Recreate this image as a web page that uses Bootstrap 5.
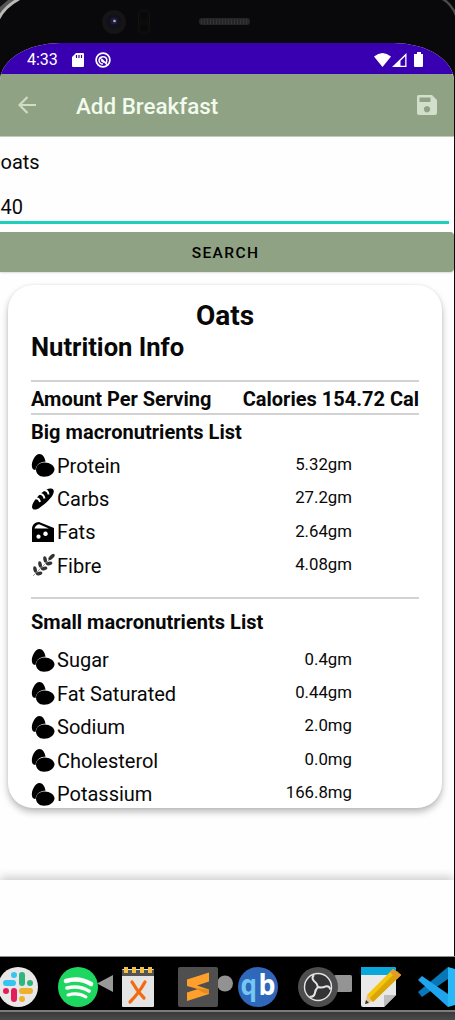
<!DOCTYPE html>
<html lang="en">
<head>
<meta charset="utf-8">
<meta name="viewport" content="width=device-width, initial-scale=1">
<title>Add Breakfast</title>
<link href="https://cdn.jsdelivr.net/npm/bootstrap@5.3.0/dist/css/bootstrap.min.css" rel="stylesheet">
<style>
body{width:455px;height:1020px;background:#09090b;font-family:Roboto,sans-serif;color:#080808;line-height:1}
svg{display:block;flex:none}
.bezel{height:43px}
.screen{width:454px;height:913px;background:#fefefe;border-radius:60px 60px 0 0/38px 38px 0 0}
.status{height:31px;background:#3900b1;color:#fff;font-size:16px;padding:2px 30px 0 27px}
.sd-icon{margin-left:14px}
.sync-icon{margin-left:11px}
.appbar{height:62px;background:#8fa283;border-radius:0 3px 0 0;padding:0 16px 0 17px}
.appbar h1{font-size:22.4px;font-weight:500;color:#f2faee;line-height:30px;margin-left:38px;padding-top:2px}
.topline{height:1px;background:#c0cbb9}
.field{font-size:20px;padding-left:.5px;height:42px;line-height:50px}
.field.focus-field{height:45px;margin-right:5px;line-height:56px;border-bottom:3px solid #1fcfbd}
.search-btn{height:40px;margin-top:8px;background:#8fa283!important;border-radius:0 4px 4px 0;font-size:15.5px;font-weight:500;letter-spacing:1.4px;padding:4px 3px 0 0;box-shadow:0 1px 2px #0002}
.food{width:434px;height:523px;margin:13px 0 0 8px;padding:15px 23px 0;border:0;border-radius:25px;box-shadow:0 4px 7px #0004,0 0 3px #0001;overflow:hidden;background:#fff;color:#080808}
.food>*{flex-shrink:0}
.food h2{font-size:28px;font-weight:700;line-height:31px;height:31px}
.food h3{font-size:25.6px;font-weight:700;line-height:33px;height:49px}
.food h4{font-size:20px;font-weight:700;letter-spacing:.03px}
.big-title{height:34px;line-height:35px}
.small-title{height:44.800px;line-height:46px}
.group-rule{margin-top:14.400px}
.rule{height:2px;background:#d2d2d2}
.serving{height:31px;font-size:20px;font-weight:700;padding-top:5px}
.nut{height:33.4px;font-size:20px;padding-right:67px}
.nut svg{margin:0 2px 1px 0}
.nut .amount{font-size:16.8px;padding-bottom:3px}
.bottomnav{height:76px;margin-top:72px;background:#fefefe;box-shadow:0 -3px 9px #0003}
.dock{height:56px;background:#000;border-top:1px solid #8e8e8e;border-bottom:2px solid #7c7c7c;width:455px;overflow:hidden}
.chin{height:8px;background:linear-gradient(#393939,#4a4a4a)}
</style>
</head>
<body class="overflow-hidden">
<svg width="0" height="0" class="position-absolute"><defs>
<symbol id="egg" viewBox="0 0 24 24"><path d="M1 14C0 9 4 1 8.500 1 11.500 1 14 4.500 14.500 8.700 10 8.700 5.500 10.500 4.500 17 2.500 17 1.300 16 1 14Z"/><path d="M5 16.500C5 12 9 9.500 14 9.500 18.500 9.500 23.500 12.500 23.500 16.500 23 20.500 19 23.700 13 23.700 8 23.700 5 20.500 5 16.500Z"/></symbol>
</defs></svg>
<div class="bezel">
<svg width="455" height="43" viewBox="0 0 455 43">
<path d="M0 15Q7 5 18 0H0Z" fill="#555"/><path d="M-2 20Q4 7 19-1" fill="none" stroke="#b9bab5" stroke-width="3"/><path d="M0 7L8 0H0Z" fill="#111"/>
<path d="M441-2Q451 3 456 15" fill="none" stroke="#4a4a4a" stroke-width="2.500"/>
<circle cx="114" cy="22" r="12" fill="#161416"/><circle cx="114" cy="22" r="7.500" fill="#11111c"/><circle cx="114" cy="21" r="3.500" fill="#1e1c38"/><circle cx="114.500" cy="21" r="1.300" fill="#b2afc8"/>
<rect x="138.500" y="10" width="11" height="24" rx="5" fill="#0c0b0c" stroke="#131213"/><circle cx="144" cy="16" r="3" fill="#080808"/><circle cx="144" cy="28" r="3" fill="#080808"/>
<rect x="199" y="18" width="51" height="7" rx="3" fill="#252526"/><path d="M201 21.500H249" stroke="#343434" stroke-width="5" stroke-dasharray="1 2"/>
</svg>
</div>
<main class="screen overflow-hidden">
<div class="status d-flex align-items-center">
<span>4:33</span>
<svg class="sd-icon" width="12" height="14" viewBox="0 0 12 14"><path d="M4 0H11Q12 0 12 1V13Q12 14 11 14H1Q0 14 0 13V4Z" fill="#fff"/><path d="M4.500 2V5M7 2V5M9.500 2V5" stroke="#3900b1" stroke-width="1.200"/></svg>
<svg class="sync-icon" width="16" height="16" viewBox="0 0 16 16" fill="none" stroke="#fff"><circle cx="8" cy="8" r="6.900" stroke-width="1.700"/><path d="M4 8.500A4 4 0 0 1 11.800 7.500C12 9 11.500 10.500 10.500 11.500M4 8.500A4 4 0 0 0 8 12M5 5.500L12.500 13M6 8.500L9 10.500" stroke-width="1.500"/></svg>
<svg class="ms-auto" width="50" height="16" viewBox="0 0 50 16"><path d="M0 4.500Q8.500-2.500 17 4.500L8.500 15Z" fill="#fff"/><path fill-rule="evenodd" d="M18 15L32.500 1V15ZM26.500 8.800L31.200 4.200V13.700H26.500Z" fill="#fff"/><path d="M43 0H47V2H49V14Q49 15 48 15H41Q40 15 40 14V2H43Z" fill="#fff"/></svg>
</div>
<header class="appbar d-flex align-items-center">
<svg width="21" height="20" viewBox="0 0 21 20"><path d="M10.500 2L2.500 10L10.500 18M2 10H19" fill="none" stroke="#cfdcc8" stroke-width="2.200"/></svg>
<h1 class="mb-0">Add Breakfast</h1>
<svg class="ms-auto" width="22" height="22" viewBox="0 0 22 22"><path fill="#d2dfcb" fill-rule="evenodd" d="M2.500 1H16L21 6V19Q21 21 19 21H3Q1 21 1 19V3Q1 1 2.500 1ZM3.500 3.500V8H14.500V3.500ZM11 12A3.200 3.200 0 1 0 11.010 12Z"/></svg>
</header>
<div class="topline"></div>
<div class="field">oats</div>
<div class="field focus-field">40</div>
<button class="search-btn btn w-100 border-0 d-flex align-items-center justify-content-center text-black">SEARCH</button>
<section class="food card">
<h2 class="text-center mb-0">Oats</h2>
<h3 class="mb-0">Nutrition Info</h3>
<div class="rule"></div>
<div class="serving d-flex justify-content-between"><span class="lh-sm">Amount Per Serving</span><span class="lh-sm">Calories 154.72 Cal</span></div>
<div class="rule"></div>
<h4 class="big-title mb-0">Big macronutrients List</h4>
<div class="nut d-flex align-items-center"><svg width="24" height="24"><use href="#egg"/></svg>Protein<span class="amount ms-auto">5.32gm</span></div>
<div class="nut d-flex align-items-center"><svg width="24" height="24" viewBox="0 0 24 24"><path d="M1 20C1 17 3 14 6 10.500 10 6 15 2 19 1.500 22 1 23.500 3 22.500 6 21 11 14 17 9 20.500 5 23.500 1 23 1 20Z"/><path d="M3 11.500Q8 10.500 9 15M7 7Q12.500 6 13.500 11.500M11.500 3Q17 2.500 17.500 7.500" fill="none" stroke="#fff" stroke-width="1.900"/></svg>Carbs<span class="amount ms-auto">27.2gm</span></div>
<div class="nut d-flex align-items-center"><svg width="24" height="24" viewBox="0 0 24 24"><path fill-rule="evenodd" d="M1 9C1 5 4 2 8 2L23 8V22H1ZM3.500 8.500H18L8 4.200Q4.500 5 3.500 8.500ZM14.500 11.500A2.300 2.300 0 1 0 14.510 11.500ZM7.500 14.500A2.100 2.100 0 1 0 7.510 14.500Z"/></svg>Fats<span class="amount ms-auto">2.64gm</span></div>
<div class="nut d-flex align-items-center"><svg width="24" height="24" viewBox="0 0 24 24"><path d="M2 23L20 5" stroke="#888" stroke-width=".8"/><g fill="#333"><ellipse cx="4" cy="16.500" rx="1.800" ry="3.300" transform="rotate(-10 4 16)"/><ellipse cx="9" cy="11.500" rx="1.800" ry="3.300" transform="rotate(-10 9 11)"/><ellipse cx="14" cy="6.500" rx="1.800" ry="3.300" transform="rotate(-10 14 6)"/><ellipse cx="8" cy="20.500" rx="3.300" ry="1.800" transform="rotate(-15 8 20)"/><ellipse cx="13" cy="15.500" rx="3.300" ry="1.800" transform="rotate(-15 13 15)"/><ellipse cx="18" cy="10.500" rx="3.300" ry="1.800" transform="rotate(-15 18 10)"/><ellipse cx="20.500" cy="4" rx="4" ry="1.900" transform="rotate(-45 20.500 4)"/></g></svg>Fibre<span class="amount ms-auto">4.08gm</span></div>
<div class="rule group-rule"></div>
<h4 class="small-title mb-0">Small macronutrients List</h4>
<div class="nut d-flex align-items-center"><svg width="24" height="24"><use href="#egg"/></svg>Sugar<span class="amount ms-auto">0.4gm</span></div>
<div class="nut d-flex align-items-center"><svg width="24" height="24"><use href="#egg"/></svg>Fat Saturated<span class="amount ms-auto">0.44gm</span></div>
<div class="nut d-flex align-items-center"><svg width="24" height="24"><use href="#egg"/></svg>Sodium<span class="amount ms-auto">2.0mg</span></div>
<div class="nut d-flex align-items-center"><svg width="24" height="24"><use href="#egg"/></svg>Cholesterol<span class="amount ms-auto">0.0mg</span></div>
<div class="nut d-flex align-items-center"><svg width="24" height="24"><use href="#egg"/></svg>Potassium<span class="amount ms-auto">166.8mg</span></div>
</section>
<div class="bottomnav"></div>
</main>
<footer class="dock">
<svg width="455" height="53" viewBox="0 957 455 53">
<path d="M97 983.500L113 975V992Z" fill="#999"/><circle cx="225" cy="983.500" r="8" fill="#929292"/><rect x="334" y="975" width="18" height="17" rx="1.500" fill="#949494"/>
<circle cx="18" cy="987" r="20" fill="#e9e7e8"/>
<g stroke-width="6" stroke-linecap="round"><path d="M6 983H13M14 975H14" stroke="#36c5f0"/><path d="M22 975V983M30 983H30" stroke="#2eb67d"/><path d="M22 991H30M22 999H22" stroke="#ecb22e"/><path d="M14 991V999M6 991H6" stroke="#e01e5a"/></g>
<circle cx="78" cy="987" r="20" fill="#1ed760"/><g fill="none" stroke="#fff" stroke-linecap="round"><path d="M66 981Q79 977 91 984" stroke-width="4.500"/><path d="M67 988Q79 985 89 991" stroke-width="3.600"/><path d="M68 995Q78 992 86 997" stroke-width="3"/></g>
<rect x="122" y="969" width="32" height="38" rx="1" fill="#e4e4e4"/><rect x="122" y="970" width="32" height="6" fill="#555"/><path d="M126 967V973M134 967V973M142 967V973M150 967V973" stroke="#f5bf42" stroke-width="4"/><path d="M132 982Q137 991 144 998M145 982Q139 993 130 1002" stroke="#f36b10" stroke-width="3.200" stroke-linecap="round" fill="none"/>
<rect x="178" y="967" width="40" height="40" rx="2" fill="#4f4f4f"/><path d="M187 979.500L209 972.500V981.500L197 985.500L209 989.500V994L187 1001V992.500L198 989L187 986Z" fill="#ffa02c"/><path d="M194 987.500L209 990V993.500L204 993Z" fill="#e58a1e"/>
<circle cx="258" cy="987" r="20" fill="#2f67ba"/><text x="240.500" y="995" font-family="Open Sans, sans-serif" font-size="29" font-weight="700" fill="#72c8f3" textLength="16.500" lengthAdjust="spacingAndGlyphs">q</text><text x="258.500" y="995" font-family="Open Sans, sans-serif" font-size="29" font-weight="700" fill="#fff" textLength="17" lengthAdjust="spacingAndGlyphs">b</text>
<circle cx="318" cy="987" r="20" fill="#4d4d4e"/><circle cx="318" cy="987" r="13.500" fill="#343336" stroke="#e4e4e4" stroke-width="1.400"/><g fill="none" stroke="#e4e4e4" stroke-width="2"><path id="blade" d="M318 987Q317 983 314 981Q311 978 314 975"/><use href="#blade" transform="rotate(120 318 987)"/><use href="#blade" transform="rotate(240 318 987)"/></g>
<path d="M361 967H394Q396 967 396 969V995L384 1007H363Q361 1007 361 1005Z" fill="#e9e9e9"/><path d="M361 967H394Q396 967 396 969V975H361Z" fill="#08a8dc"/><path d="M384 1007V995H396Z" fill="#bcbcbc"/><path d="M365 1004L367 995L373 1001Z" fill="#e8c58c"/><path d="M365 1004L366 1000L369 1003Z" fill="#333"/><path d="M367 995L393 969L401 975L373 1002Z" fill="#f5c40b"/><path d="M370 998L397 971L401 975L373 1002Z" fill="#d9a508"/><path d="M390 972L393 969L401 975L397 979Z" fill="#e49a2b"/>
<path d="M448 967L418 992L422 997L448 979Z" fill="#0877b8"/><path d="M422 976L418 980L448 1007V994Z" fill="#1fa4ee"/><path d="M448 967L458 970V1004L448 1007Z" fill="#28b8fa"/>
</svg>
</footer>
<div class="chin"></div>
<script src="https://cdn.jsdelivr.net/npm/bootstrap@5.3.0/dist/js/bootstrap.bundle.min.js"></script>
</body>
</html>
